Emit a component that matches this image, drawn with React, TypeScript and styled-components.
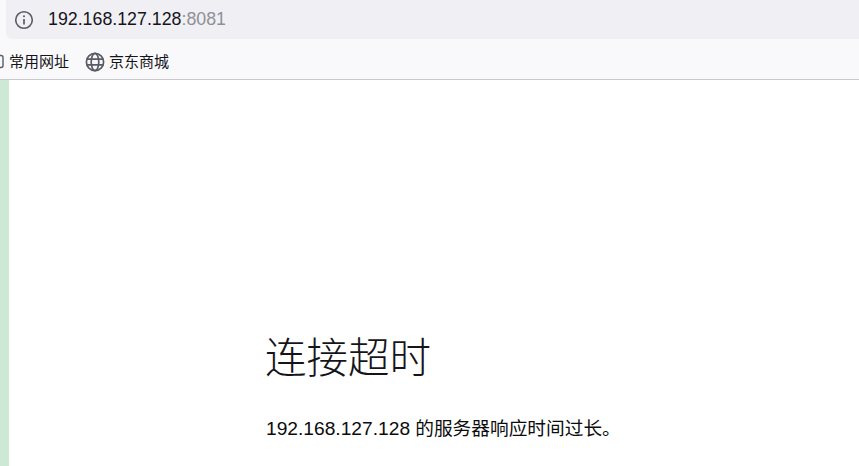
import React from "react";
import styled, { createGlobalStyle } from "styled-components";

const Global = createGlobalStyle`
  html, body { margin: 0; padding: 0; background: #fff; overflow: hidden; }
  #root { width: 859px; height: 466px; }
`;

const FONT = `"Liberation Sans", "Noto Sans CJK SC", sans-serif`;

const Page = styled.div`
  width: 859px;
  height: 466px;
  display: flex;
  flex-direction: column;
  overflow: hidden;
  font-family: ${FONT};
`;

const Chrome = styled.header`
  background: #f9f9fb;
  border-bottom: 1px solid #c8c8cc;
  height: 79px;
  flex: none;
`;

const AddressBar = styled.div`
  height: 39px;
  margin-left: 6px;
  padding-left: 8px;
  background: #f0f0f4;
  border-bottom-left-radius: 6px;
  display: flex;
  align-items: center;
  gap: 14px;
`;

const Url = styled.span`
  font-size: 17.8px;
  color: #15141a;
  line-height: 1;
`;

const Port = styled.span`
  color: #8f8f96;
`;

const Bookmarks = styled.nav`
  height: 40px;
  display: flex;
  align-items: center;
  gap: 16px;
  padding-top: 3px;
  box-sizing: border-box;
`;

const Bookmark = styled.span<{ $gap: number }>`
  display: flex;
  align-items: center;
  gap: ${(p) => p.$gap}px;
  font-size: 15px;
  color: #15141a;
`;

const Body = styled.div`
  flex: 1;
  display: flex;
  min-height: 0;
`;

const Strip = styled.div`
  width: 9px;
  flex: none;
  background: #cde9d5;
`;

const Main = styled.main`
  flex: 1;
  padding: 250px 0 0 257px;
  color: #15141a;
`;

const Title = styled.h1`
  margin: 0 0 0 -1px;
  padding-top: 2px;
  font-size: 41.5px;
  font-weight: 300;
  line-height: 54px;
`;

const Message = styled.p`
  margin: 30px 0 0;
  font-size: 18.7px;
  line-height: 26px;
  color: #0c0c0d;
`;

const Address = styled.span`
  font-size: 19.2px;
`;

const GlobeSvg = styled.svg`
  margin-top: 2px;
`;

const InfoIcon = () => (
  <svg width="20" height="20" viewBox="0 0 20 20" fill="none" stroke="#5b5b66" strokeWidth="1.6">
    <circle cx="10" cy="10" r="8.3" />
    <path d="M10 9v5.4" strokeWidth="1.7" />
    <circle cx="10" cy="6.2" r="1" fill="#5b5b66" stroke="none" />
  </svg>
);

const FolderIcon = () => (
  <svg width="4" height="16" viewBox="0 0 4 16" fill="none" stroke="#5b5b66" strokeWidth="1.4">
    <path d="M-4 2.5h5a2 2 0 0 1 2 2v8a2 2 0 0 1-2 2h-5" />
  </svg>
);

const GlobeIcon = () => (
  <GlobeSvg width="20" height="20" viewBox="0 0 20 20" fill="none" stroke="#5b5b66" strokeWidth="1.7">
    <circle cx="10" cy="10" r="8.6" />
    <ellipse cx="10" cy="10" rx="3.8" ry="8.6" />
    <path d="M1.5 7.2h17M1.5 12.8h17" />
  </GlobeSvg>
);

export default function App() {
  return (
    <Page>
      <Global />
      <Chrome>
        <AddressBar>
          <InfoIcon />
          <Url>
            192.168.127.128<Port>:8081</Port>
          </Url>
        </AddressBar>
        <Bookmarks>
          <Bookmark $gap={5}>
            <FolderIcon />
            常用网址
          </Bookmark>
          <Bookmark $gap={4}>
            <GlobeIcon />
            京东商城
          </Bookmark>
        </Bookmarks>
      </Chrome>
      <Body>
        <Strip />
        <Main>
          <Title>连接超时</Title>
          <Message>
            <Address>192.168.127.128</Address> 的服务器响应时间过长。
          </Message>
        </Main>
      </Body>
    </Page>
  );
}
